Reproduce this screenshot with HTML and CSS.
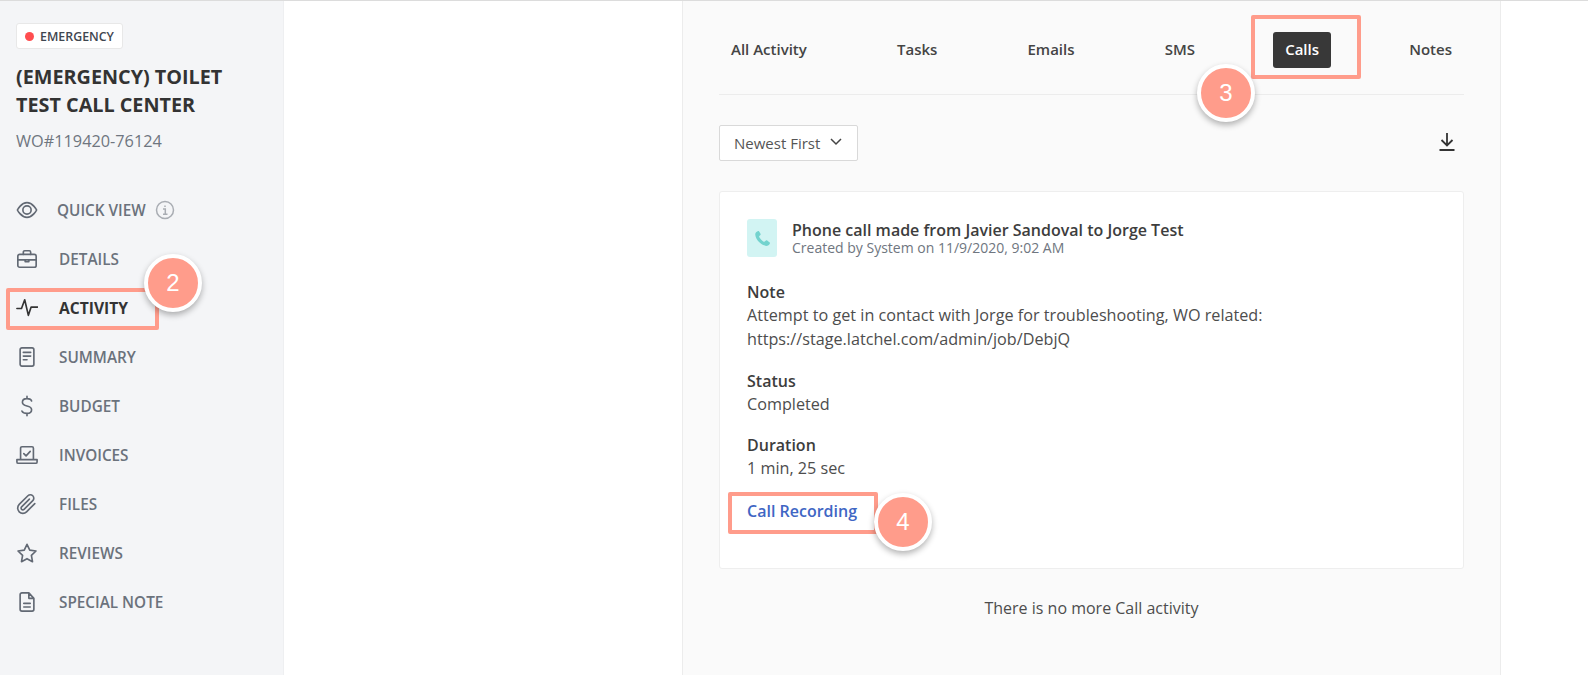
FILE: index.html
```html
<!DOCTYPE html>
<html lang="en">
<head>
    <meta charset="UTF-8">
    <meta name="viewport" content="width=device-width, initial-scale=1.0">
    <title>Work Order Activity</title>
    <link rel="stylesheet" href="styles.css">
</head>
<body>
    <div class="page">
        <aside class="sidebar">
            <div class="tag"><span class="tag-dot"></span>EMERGENCY</div>
            <h1 class="job-title">(EMERGENCY) TOILET TEST CALL CENTER</h1>
            <div class="job-number">WO#119420-76124</div>

            <nav class="nav">
                <a class="nav-item nav-item-quick">
                    <svg class="nav-icon" viewBox="0 0 24 24"><path d="M1.500 12S5.500 4 12 4s10.500 8 10.500 8-4 8-10.500 8S1.500 12 1.500 12z"/><circle cx="12" cy="12" r="4.500"/></svg>
                    <span>QUICK VIEW</span>
                    <svg class="info-icon" viewBox="0 0 20 20"><circle cx="10" cy="10" r="8.500"/><path d="M8 9h2.300v5M8 14.200h4.500M10 5.500v1.500"/></svg>
                </a>
                <a class="nav-item">
                    <svg class="nav-icon" viewBox="0 0 24 24"><rect x="2" y="7" width="20" height="14" rx="2"/><path d="M8 7V4.500A1.500 1.500 0 0 1 9.500 3h5A1.500 1.500 0 0 1 16 4.500V7M2 13h20M10 13v2h4v-2"/></svg>
                    <span>DETAILS</span>
                </a>
                <a class="nav-item active">
                    <svg class="nav-icon" viewBox="0 0 24 24"><path d="M1 12.500h5l3.500-9.500 4 17 3-9h7"/></svg>
                    <span>ACTIVITY</span>
                </a>
                <a class="nav-item">
                    <svg class="nav-icon" viewBox="0 0 24 24"><rect x="4.500" y="2" width="15" height="20" rx="2"/><path d="M8 7h8M8 11h8M8 15h4"/></svg>
                    <span>SUMMARY</span>
                </a>
                <a class="nav-item">
                    <svg class="nav-icon" viewBox="0 0 24 24"><path d="M12 1.500V4M12 20v2.500M17 6.500C16.500 4.500 14.500 4 12 4 9 4 7 5.500 7 8c0 2.500 2.500 3.500 5 4 2.500.5 5 1.500 5 4 0 2.500-2 4-5 4-2.500 0-4.500-.5-5.500-2.500"/></svg>
                    <span>BUDGET</span>
                </a>
                <a class="nav-item">
                    <svg class="nav-icon" viewBox="0 0 24 24"><path d="M5 17V4.500A1.500 1.500 0 0 1 6.500 3h11A1.500 1.500 0 0 1 19 4.500V17M1 17v2.500A1.500 1.500 0 0 0 2.500 21h19a1.500 1.500 0 0 0 1.500-1.500V17zM8.500 10.500l2.500 2.500 4.500-5"/></svg>
                    <span>INVOICES</span>
                </a>
                <a class="nav-item">
                    <svg class="nav-icon" viewBox="0 0 24 24"><path d="M20.500 11.500l-9 9a5.500 5.500 0 0 1-8-8l9.500-9.500a3.700 3.700 0 0 1 5.300 5.300l-9.500 9.500a1.900 1.900 0 0 1-2.700-2.700l8.500-8.500"/></svg>
                    <span>FILES</span>
                </a>
                <a class="nav-item">
                    <svg class="nav-icon" viewBox="0 0 24 24"><path d="M12 2.500l3 6.300 6.800 1-5 4.800 1.200 6.900-6-3.300-6 3.300 1.200-6.900-5-4.800 6.800-1z"/></svg>
                    <span>REVIEWS</span>
                </a>
                <a class="nav-item">
                    <svg class="nav-icon" viewBox="0 0 24 24"><path d="M14 2H6.500A2 2 0 0 0 4.500 4v16a2 2 0 0 0 2 2h11a2 2 0 0 0 2-2V8zM14 2v6h5.500M8.500 13.500h7M8.500 17.500h7"/></svg>
                    <span>SPECIAL NOTE</span>
                </a>
            </nav>
        </aside>

        <main class="panel">
            <div class="tabs">
                <a class="tab">All Activity</a>
                <a class="tab">Tasks</a>
                <a class="tab">Emails</a>
                <a class="tab">SMS</a>
                <a class="tab tab-active">Calls</a>
                <a class="tab">Notes</a>
            </div>

            <div class="toolbar">
                <div class="sort">
                    Newest First
                    <svg class="sort-arrow" viewBox="0 0 12 8"><path d="M1 1l5 5 5-5"/></svg>
                </div>
                <svg class="download" viewBox="0 0 18 20"><path d="M9 1v12M3.500 8L9 13.500 14.500 8M1.500 18h15"/></svg>
            </div>

            <div class="card">
                <div class="card-head">
                    <div class="call-icon">
                        <svg viewBox="0 0 24 24"><path d="M6.600 2.500c-.6 0-3.100 1.200-3.600 3.100-.7 3 1.300 7.300 4.600 10.800 3.400 3.400 7.600 5.500 10.700 4.800 1.900-.4 3.200-2.900 3.200-3.500 0-.7-3.800-3.500-4.500-3.500-.8 0-2 2-2.800 2-1.500 0-6.500-5-6.500-6.700 0-.8 2-1.900 2-2.700 0-.8-2.100-4.300-2.600-4.300z"/></svg>
                    </div>
                    <div class="card-text">
                        <div class="card-title">Phone call made from Javier Sandoval to Jorge Test</div>
                        <div class="card-sub">Created by System on 11/9/2020, 9:02 AM</div>
                    </div>
                </div>

                <div class="field">
                    <div class="field-label">Note</div>
                    <div class="field-value">Attempt to get in contact with Jorge for troubleshooting, WO related:<br>https://stage.latchel.com/admin/job/DebjQ</div>
                </div>
                <div class="field">
                    <div class="field-label">Status</div>
                    <div class="field-value">Completed</div>
                </div>
                <div class="field">
                    <div class="field-label">Duration</div>
                    <div class="field-value">1 min, 25 sec</div>
                </div>
                <a class="recording">Call Recording</a>
            </div>

            <div class="no-more">There is no more Call activity</div>
        </main>
    </div>

    <!-- tutorial markers over the screenshot -->
    <div class="mark-box mark-box-activity"></div>
    <div class="mark-box mark-box-calls"></div>
    <div class="mark-box mark-box-recording"></div>
    <div class="step step-2">2</div>
    <div class="step step-3">3</div>
    <div class="step step-4">4</div>
</body>
</html>
```

FILE: styles.css
```css
* {
    box-sizing: border-box;
    margin: 0;
    padding: 0;
}

body {
    font-family: 'Open Sans', sans-serif;
    background-color: #fff;
    color: #3d3d3d;
    height: 675px;
    overflow: hidden;
    position: relative;
}

.page {
    display: flex;
    height: 675px;
    border-top: 1px solid #dcdcdc;
}

/* sidebar */
.sidebar {
    width: 284px;
    flex: none;
    background-color: #f4f5f7;
    border-right: 1px solid #eeeff1;
    padding: 22px 0 0 16px;
}

.tag {
    display: inline-flex;
    align-items: center;
    height: 26px;
    padding: 0 8px;
    background-color: #fff;
    border: 1px solid #e8e8e8;
    border-radius: 3px;
    font-size: 12.400px;
    font-weight: 600;
    color: #3f4650;
}

.tag-dot {
    width: 9px;
    height: 9px;
    border-radius: 50%;
    background-color: #ff4d4f;
    margin-right: 6px;
}

.job-title {
    width: 250px;
    margin-top: 14px;
    font-size: 19.800px;
    line-height: 28px;
    font-weight: 700;
    color: #333;
}

.job-number {
    margin-top: 12px;
    font-size: 16.300px;
    line-height: 20px;
    color: #6f7680;
}

.nav {
    margin-top: 34px;
}

.nav-item {
    display: flex;
    align-items: center;
    height: 49px;
    font-size: 15.300px;
    font-weight: 600;
    color: #6b727c;
}

.nav-icon {
    width: 22px;
    height: 22px;
    flex: none;
    margin-right: 21px;
    fill: none;
    stroke: #626974;
    stroke-width: 1.800;
    stroke-linecap: round;
    stroke-linejoin: round;
}

.nav-item-quick .nav-icon {
    margin-right: 19px;
}

.nav-item.active {
    color: #333;
    font-weight: 700;
    font-size: 15.600px;
}

.nav-item.active .nav-icon {
    stroke: #333;
}

.info-icon {
    width: 20px;
    height: 20px;
    margin-left: 9px;
    fill: none;
    stroke: #a9adb3;
    stroke-width: 1.500;
}

/* activity panel */
.panel {
    width: 819px;
    margin-left: 398px;
    padding: 0 36px 0 36px;
    background-color: #fafafa;
    border-left: 1px solid #ececec;
    border-right: 1px solid #ececec;
}

.tabs {
    display: flex;
    justify-content: space-between;
    align-items: center;
    height: 94px;
    padding-top: 4px;
    border-bottom: 1px solid #ececec;
}

.tab {
    padding: 0 12px;
    height: 36px;
    line-height: 35px;
    border-radius: 3px;
    font-size: 15px;
    font-weight: 600;
    color: #444;
}

.tab-active {
    background-color: #383838;
    color: #fff;
}

.toolbar {
    display: flex;
    justify-content: space-between;
    align-items: center;
    margin-top: 30px;
}

.sort {
    display: flex;
    align-items: center;
    height: 36px;
    width: 139px;
    padding-left: 14px;
    background-color: #fff;
    border: 1px solid #d9d9d9;
    border-radius: 2px;
    font-size: 15px;
    color: #555;
}

.sort-arrow {
    width: 12px;
    height: 8px;
    margin: -3px 0 0 10px;
    fill: none;
    stroke: #444;
    stroke-width: 1.500;
}

.download {
    width: 18px;
    height: 20px;
    margin: -3px 8px 0 0;
    fill: none;
    stroke: #333;
    stroke-width: 1.800;
}

.card {
    height: 378px;
    margin-top: 30px;
    padding: 27px 27px;
    background-color: #fff;
    border: 1px solid #eee;
    border-radius: 3px;
}

.card-head {
    display: flex;
    align-items: center;
    gap: 15px;
    margin-bottom: 24px;
}

.call-icon {
    display: flex;
    align-items: center;
    justify-content: center;
    width: 30px;
    height: 38px;
    border-radius: 3px;
    background-color: #d2f4f3;
}

.call-icon svg {
    width: 19px;
    height: 19px;
    fill: #73d3ce;
}

.card-text {
    padding-top: 1px;
}

.card-title {
    font-size: 16px;
    line-height: 18px;
    font-weight: 600;
    color: #3d3d3d;
}

.card-sub {
    margin-top: 1px;
    font-size: 14px;
    line-height: 16px;
    color: #6f7680;
}

.field {
    margin-bottom: 18.500px;
    font-size: 16px;
}

.field-label {
    line-height: 22px;
    font-weight: 600;
    color: #3d3d3d;
}

.field-value {
    font-size: 16.200px;
    line-height: 24px;
    color: #4d4d4d;
}

.recording {
    display: block;
    margin-top: 1px;
    font-size: 16px;
    line-height: 24px;
    font-weight: 600;
    color: #3f66c4;
}

.no-more {
    margin-top: 27px;
    text-align: center;
    font-size: 16px;
    line-height: 24px;
    color: #4d4d4d;
}

/* tutorial markers */
.mark-box {
    position: absolute;
    border: 4px solid #ff9c8b;
    border-radius: 2px;
}

.mark-box-activity {
    left: 6px;
    top: 288px;
    width: 153px;
    height: 42px;
}

.mark-box-calls {
    left: 1251px;
    top: 15px;
    width: 110px;
    height: 64px;
}

.mark-box-recording {
    left: 728px;
    top: 492px;
    width: 150px;
    height: 42px;
}

.step {
    position: absolute;
    width: 58px;
    height: 58px;
    border: 4px solid #fff;
    border-radius: 50%;
    background-color: #ff9c8b;
    box-shadow: 0 3px 6px rgba(0, 0, 0, 0.3);
    color: #fff;
    font-family: 'Liberation Sans', sans-serif;
    font-size: 24px;
    line-height: 50px;
    text-align: center;
}

.step-2 {
    left: 144px;
    top: 254px;
}

.step-3 {
    left: 1197px;
    top: 64px;
}

.step-4 {
    left: 874px;
    top: 493px;
}
```
